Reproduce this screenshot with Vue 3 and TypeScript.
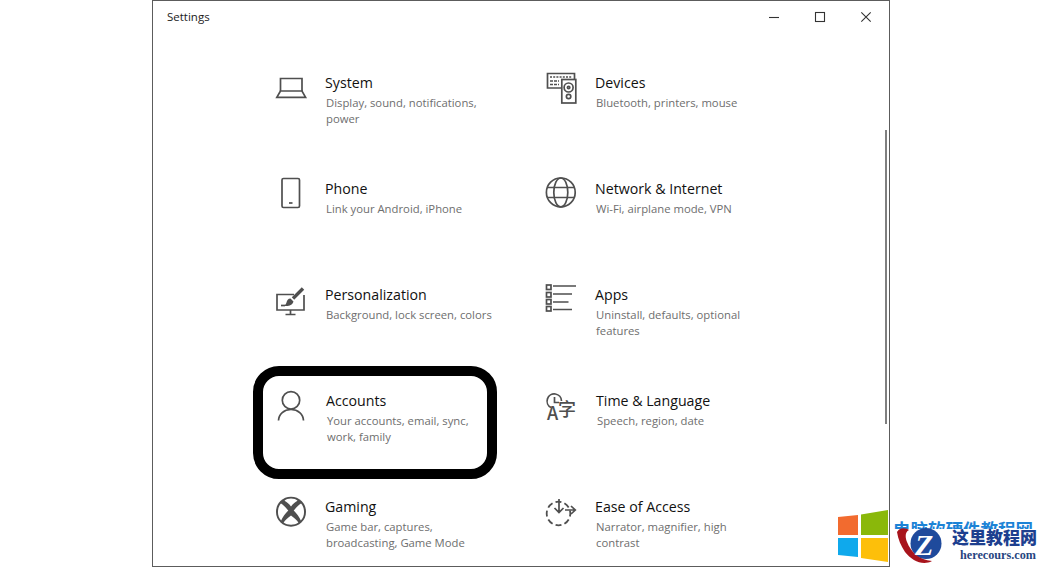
<template>
  <div class="window">
    <header class="titlebar">
      <span class="titlebar__name">Settings</span>
      <div class="titlebar__controls">
        <svg width="14" height="14" viewBox="0 0 14 14"><path d="M2 7.5H12" /></svg>
        <svg width="14" height="14" viewBox="0 0 14 14"><rect x="2.5" y="2.5" width="9" height="9" /></svg>
        <svg width="14" height="14" viewBox="0 0 14 14"><path d="M2.3 2.3L11.7 11.7M11.7 2.3L2.3 11.7" /></svg>
      </div>
    </header>

    <div class="scrollbar"></div>

    <div class="grid">
      <div v-for="item in items" :key="item.title" class="item" :class="{ 'item--shift': item.shift }">
        <svg class="item__icon" width="32" height="36" viewBox="0 0 32 36">
          <g v-if="item.icon === 'system'">
            <path d="M5.5 21V8.5H27V21" />
            <path d="M5.5 21L1.8 27.4H30.6L27 21Z" />
          </g>
          <g v-else-if="item.icon === 'devices'">
            <path d="M16 18H2.5V3.5H29.5V9" />
            <rect x="16.8" y="9.5" width="14" height="23.5" />
            <circle cx="23.6" cy="17.5" r="4.5" />
            <circle cx="23.6" cy="17.5" r="1.2" />
            <circle cx="23.6" cy="26.5" r="2.2" />
            <path class="thin" d="M5 7H27" stroke-dasharray="2 1.2" />
            <path class="thin" d="M5 11H14M5 14.5H14" stroke-dasharray="3 1" />
          </g>
          <g v-else-if="item.icon === 'phone'">
            <rect x="7" y="2.5" width="17.5" height="29" rx="1.5" />
            <path d="M14 27H17.5" />
          </g>
          <g v-else-if="item.icon === 'network'">
            <circle cx="15.8" cy="16.4" r="14.4" />
            <ellipse cx="15.8" cy="16.4" rx="7" ry="14.4" />
            <path d="M2.5 11.5H29M2.5 21.5H29" />
          </g>
          <g v-else-if="item.icon === 'personalization'">
            <path d="M19 12.5H2V28H29V13" />
            <path d="M15.5 28V32M10.5 32.5H20.5" />
            <path d="M6 23.5H10" />
            <path d="M28 6.5L18 16.5" class="wide" />
            <path class="solid" d="M15.5 16.5C13 16.5 12 18.5 11.5 20.5C11.2 22 10 23 9 23.7C12.5 24.5 17 24 18.5 19.5Z" />
          </g>
          <g v-else-if="item.icon === 'apps'">
            <rect x="1.5" y="3" width="4.5" height="4.5" />
            <rect x="1.5" y="10.5" width="4.5" height="4.5" />
            <rect x="1.5" y="17.5" width="4.5" height="4.5" />
            <rect x="1.5" y="24.5" width="4.5" height="4.5" />
            <path d="M8 4H31M8 12H27M8 20H23.5M8 27.5H27" />
          </g>
          <g v-else-if="item.icon === 'accounts'">
            <circle cx="16" cy="12.3" r="8.7" />
            <path d="M3.5 32.5C3.8 26 9 21.5 16 21.5C23 21.5 28.2 26 28.5 32.5" />
          </g>
          <g v-else-if="item.icon === 'time'">
            <path d="M6 19.5A7.2 7.2 0 1 1 16.5 13" />
            <path d="M9.5 9V14.5H14" />
            <text class="glyph" x="2" y="31.5" font-size="18">A</text>
            <text class="glyph" x="13" y="28" font-size="18">字</text>
          </g>
          <g v-else-if="item.icon === 'gaming'">
            <circle class="solid" cx="16" cy="17.7" r="15" />
            <path class="gap" d="M9.5 6.8C12 3.8 20 3.8 22.5 6.8C20.5 7.6 18 10 16 12.5C14 10 11.5 7.6 9.5 6.8Z" />
            <path class="gap" d="M6 9.6C1.8 14 2 22.5 6.2 26.6C7.4 23.2 10.6 19.4 13.3 16.6C10.6 13.6 8 10.6 6 9.6Z" />
            <path class="gap" d="M26 9.6C30.2 14 30 22.5 25.8 26.6C24.6 23.2 21.4 19.4 18.7 16.6C21.4 13.6 24 10.6 26 9.6Z" />
            <path class="gap" d="M16 21.5C13 23.7 10 26.3 8.6 28.6C12.5 31.6 19.5 31.6 23.4 28.6C22 26.3 19 23.7 16 21.5Z" />
          </g>
          <g v-else-if="item.icon === 'access'">
            <circle cx="13.5" cy="19.5" r="11.8" stroke-width="1.8" stroke-dasharray="6 3.2" stroke-dashoffset="3" />
            <path d="M14 5V18M9.5 14L14 18.5L18.5 14" />
            <path d="M20 16H30M26 12L30.3 16L26 20" />
          </g>
        </svg>
        <div class="item__text">
          <div class="item__title">{{ item.title }}</div>
          <div class="item__desc">{{ item.desc }}</div>
        </div>
        <div v-if="item.marked" class="item__mark"></div>
      </div>
    </div>
  </div>

  <div class="watermark">
    <svg class="watermark__win" width="52" height="54" viewBox="0 0 52 54">
      <polygon points="0,7 20,5 20,25 0,25" fill="#f26b2f" />
      <polygon points="23,4.5 50,0 50,25 23,25" fill="#8ab80a" />
      <polygon points="0,28 20,28 20,47 0,45" fill="#0fa9ec" />
      <polygon points="23,28 50,28 50,52 23,48" fill="#fdbf0a" />
    </svg>
    <div class="watermark__clip">电脑软硬件教程网</div>
    <svg class="watermark__logo" width="56" height="39" viewBox="0 0 56 39">
      <circle cx="30" cy="15.5" r="15.5" fill="#1f4a9c" />
      <path d="M1 4C4 -1 10 0 13 2C9 4 9 9 11 14C15 24 23 32 36 33C27 38 16 33 9 24C5 18 2 11 1 4Z" fill="#a8141c" />
      <text class="watermark__z" x="19" y="27" font-size="30">Z</text>
    </svg>
    <div class="watermark__cn">这里教程网</div>
    <div class="watermark__en">herecours.com</div>
  </div>
</template>

<script setup lang="ts">
type SettingsItem = {
  icon: string
  title: string
  desc: string
  marked?: boolean
  shift?: boolean
}

const items: SettingsItem[] = [
  { icon: 'system', title: 'System', desc: 'Display, sound, notifications, power' },
  { icon: 'devices', title: 'Devices', desc: 'Bluetooth, printers, mouse' },
  { icon: 'phone', title: 'Phone', desc: 'Link your Android, iPhone' },
  { icon: 'network', title: 'Network & Internet', desc: 'Wi-Fi, airplane mode, VPN' },
  { icon: 'personalization', title: 'Personalization', desc: 'Background, lock screen, colors' },
  { icon: 'apps', title: 'Apps', desc: 'Uninstall, defaults, optional features' },
  { icon: 'accounts', title: 'Accounts', desc: 'Your accounts, email, sync, work, family', marked: true, shift: true },
  { icon: 'time', title: 'Time & Language', desc: 'Speech, region, date', shift: true },
  { icon: 'gaming', title: 'Gaming', desc: 'Game bar, captures, broadcasting, Game Mode' },
  { icon: 'access', title: 'Ease of Access', desc: 'Narrator, magnifier, high contrast' }
]
</script>

<style>
html,
body {
  margin: 0;
  background: #fff;
  overflow: hidden;
}
</style>

<style scoped>
.window {
  position: relative;
  box-sizing: border-box;
  width: 738px;
  height: 567px;
  margin-left: 152px;
  border: 1px solid #5c5c5c;
  background: #fff;
  overflow: hidden;
  font-family: "Open Sans", "Liberation Sans", sans-serif;
}

.titlebar {
  display: flex;
  justify-content: space-between;
  height: 32px;
}

.titlebar__name {
  margin: 7px 0 0 14px;
  font-size: 11.5px;
  line-height: 18px;
  color: #1a1a1a;
}

.titlebar__controls {
  display: flex;
  gap: 32px;
  padding: 9px 16px 0 0;
  height: 14px;
}

.titlebar__controls svg {
  fill: none;
  stroke: #333;
  stroke-width: 1.1;
}

.scrollbar {
  position: absolute;
  top: 129px;
  right: 2px;
  width: 2px;
  height: 294px;
  background: #808080;
}

.grid {
  display: grid;
  grid-template-columns: 270px 270px;
  grid-auto-rows: 106px;
  padding: 33px 0 0 122px;
}

.item {
  position: relative;
  display: flex;
  gap: 18px;
}

.item--shift .item__text {
  margin-left: 1px;
}

.item__icon {
  flex: none;
  margin-top: 4px;
  overflow: visible;
  fill: none;
  stroke: #4f4f4f;
  stroke-width: 1.7;
}

.item__icon .thin {
  stroke-width: 1.3;
}

.item__icon .wide {
  stroke-width: 3.4;
}

.item__icon .solid {
  fill: #4f4f4f;
  stroke: none;
}

.item__icon .gap {
  fill: #fff;
  stroke: none;
}

.item__icon .glyph {
  fill: #4f4f4f;
  stroke: none;
  font-weight: 500;
  font-family: "Noto Sans CJK SC", "Liberation Sans", sans-serif;
}

.item__text {
  padding-top: 6px;
  width: 171px;
}

.item__title {
  font-size: 14.2px;
  line-height: 22px;
  color: #111;
}

.item__desc {
  margin: 1px 0 0 1px;
  font-size: 11.3px;
  line-height: 16px;
  color: #6e6e6e;
}

.item__mark {
  position: absolute;
  top: -18px;
  left: -22px;
  box-sizing: border-box;
  width: 244px;
  height: 113px;
  border: 10px solid #000;
  border-radius: 26px;
}

.watermark {
  position: absolute;
  top: 510px;
  left: 838px;
  width: 204px;
  height: 57px;
  overflow: hidden;
}

.watermark__win {
  position: absolute;
  top: 0;
  left: 0;
}

.watermark__clip {
  position: absolute;
  top: 8px;
  left: 55px;
  height: 11px;
  overflow: hidden;
  white-space: nowrap;
  font-family: "Noto Sans CJK SC", sans-serif;
  font-size: 17.5px;
  line-height: 22px;
  font-weight: 700;
  color: #1c83d6;
}

.watermark__logo {
  position: absolute;
  top: 18px;
  left: 58px;
}

.watermark__z {
  fill: #fff;
  font-family: "Liberation Serif", serif;
  font-weight: 700;
  font-style: italic;
}

.watermark__cn {
  position: absolute;
  top: 16px;
  left: 114px;
  white-space: nowrap;
  font-family: "Noto Sans CJK SC", sans-serif;
  font-size: 17px;
  line-height: 22px;
  font-weight: 900;
  color: #1d3f8f;
}

.watermark__en {
  position: absolute;
  top: 38px;
  left: 122px;
  white-space: nowrap;
  font-family: "Liberation Serif", serif;
  font-size: 12.2px;
  line-height: 14px;
  font-weight: 700;
  color: #27457f;
}
</style>
